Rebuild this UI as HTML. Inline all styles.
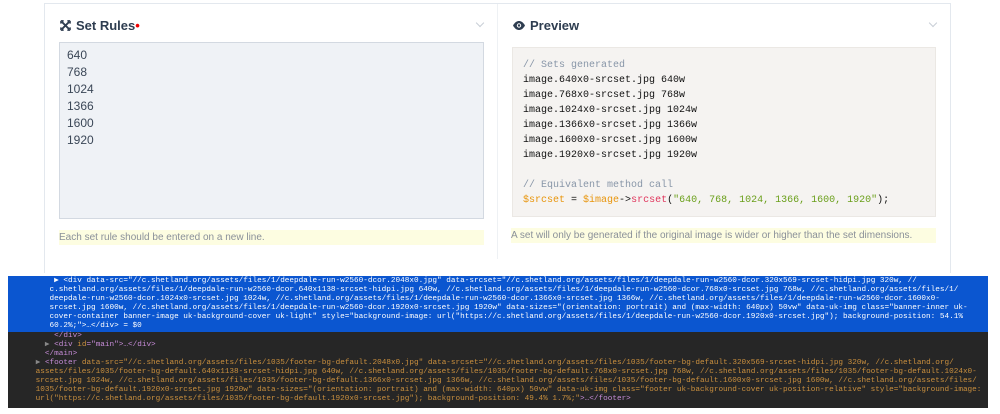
<!DOCTYPE html>
<html><head><meta charset="utf-8"><style>
*{margin:0;padding:0;box-sizing:border-box}
body{width:1000px;height:414px;background:#fff;font-family:"Liberation Sans",sans-serif;position:relative;overflow:hidden}
.card{position:absolute;left:44px;top:3px;width:907px;height:270px;border-left:1px solid #e3e8ee;border-right:1px solid #e3e8ee;border-top:1px solid #e3e8ee}
.div{position:absolute;left:497px;top:4px;width:1px;height:255px;background:#eef1f4}
.t{position:absolute;top:18px;font-size:13px;font-weight:bold;color:#2e3d50;display:flex;align-items:center;gap:5px}
.chev{position:absolute;top:20px;width:6px;height:6px;border-right:1px solid #c8ced6;border-bottom:1px solid #c8ced6;transform:rotate(45deg)}
.ta{position:absolute;left:59px;top:42px;width:425px;height:177px;background:#eff2f6;border:1px solid #d3d9e1;padding:4px 7px;font-size:12px;line-height:17px;color:#3b4757}
.help{position:absolute;background:#fdfde1;font-size:10px;color:#8a9099;line-height:15px;height:15px}
.code{position:absolute;left:512px;top:47px;width:424px;height:170px;background:#f5f3f1;border:1px solid #ebe8e4;padding:10px 10px;font-family:"Liberation Mono",monospace;font-size:10px;line-height:15px;color:#111;white-space:pre}
.c{color:#8896a8}.o{color:#e8950c}.p{color:#e0355c}.g{color:#6a9f1a}
.dev{position:absolute;left:8px;top:276px;width:980px;height:132px;background:#262626;font-family:"Liberation Mono",monospace;font-size:7.7px;line-height:9px;white-space:pre;overflow:hidden}
.blue{background:#0b56d0;color:#fff;height:56px;padding-top:1px}
.dk{color:#c98f3e}
.tag{color:#c58bd6}
</style></head><body>
<div class="card"></div>
<div class="div"></div>
<div class="t" style="left:60px"><svg width="11" height="11" viewBox="0 0 12 12" fill="none" stroke="#2e3d50" stroke-width="2"><path d="M2 2L10 10M10 2L2 10"/><path d="M1 1h3M1 1v3M11 1h-3M11 1v3M1 11h3M1 11v-3M11 11h-3M11 11v-3" stroke-width="1.6"/></svg><span>Set Rules<span style="color:#e00">•</span></span></div>
<div class="chev" style="left:477px"></div>
<div class="ta">640<br>768<br>1024<br>1366<br>1600<br>1920</div>
<div class="help" style="left:59px;top:230px;width:425px">Each set rule should be entered on a new line.</div>
<div class="t" style="left:513px"><svg width="12" height="9" viewBox="0 0 12 9"><path d="M0 4.5C2 1 4 0 6 0s4 1 6 4.5C10 8 8 9 6 9S2 8 0 4.5z" fill="#2e3d50"/><circle cx="6" cy="4.5" r="2.2" fill="#fff"/><circle cx="6" cy="4.5" r="1.2" fill="#2e3d50"/></svg><span>Preview</span></div>
<div class="chev" style="left:930px"></div>
<div class="code"><span class="c">// Sets generated</span>
image.640x0-srcset.jpg 640w
image.768x0-srcset.jpg 768w
image.1024x0-srcset.jpg 1024w
image.1366x0-srcset.jpg 1366w
image.1600x0-srcset.jpg 1600w
image.1920x0-srcset.jpg 1920w

<span class="c">// Equivalent method call</span>
<span class="o">$srcset</span> = <span class="o">$image</span>-&gt;<span class="p">srcset</span>(<span class="g">"640, 768, 1024, 1366, 1600, 1920"</span>);</div>
<div class="help" style="left:511px;top:228px;width:425px">A set will only be generated if the original image is wider or higher than the set dimensions.</div>
<div class="dev"><div class="blue">          ▶ &lt;div data-src="//c.shetland.org/assets/files/1/deepdale-run-w2560-dcor.2048x0.jpg" data-srcset="//c.shetland.org/assets/files/1/deepdale-run-w2560-dcor.320x569-srcset-hidpi.jpg 320w, //
         c.shetland.org/assets/files/1/deepdale-run-w2560-dcor.640x1138-srcset-hidpi.jpg 640w, //c.shetland.org/assets/files/1/deepdale-run-w2560-dcor.768x0-srcset.jpg 768w, //c.shetland.org/assets/files/1/
         deepdale-run-w2560-dcor.1024x0-srcset.jpg 1024w, //c.shetland.org/assets/files/1/deepdale-run-w2560-dcor.1366x0-srcset.jpg 1366w, //c.shetland.org/assets/files/1/deepdale-run-w2560-dcor.1600x0-
         srcset.jpg 1600w, //c.shetland.org/assets/files/1/deepdale-run-w2560-dcor.1920x0-srcset.jpg 1920w" data-sizes="(orientation: portrait) and (max-width: 640px) 50vw" data-uk-img class="banner-inner uk-
         cover-container banner-image uk-background-cover uk-light" style="background-image: url("https://c.shetland.org/assets/files/1/deepdale-run-w2560-dcor.1920x0-srcset.jpg"); background-position: 54.1%
         60.2%;"&gt;…&lt;/div&gt; = $0</div><div class="tag">          &lt;/div&gt;
        <span style="color:#888">▶</span> &lt;div <span class="dk">id</span>="main"&gt;…&lt;/div&gt;
        &lt;/main&gt;
      <span style="color:#888">▶</span> &lt;footer <span class="dk">data-src="//c.shetland.org/assets/files/1035/footer-bg-default.2048x0.jpg" data-srcset="//c.shetland.org/assets/files/1035/footer-bg-default.320x569-srcset-hidpi.jpg 320w, //c.shetland.org/</span>
<span class="dk">      assets/files/1035/footer-bg-default.640x1138-srcset-hidpi.jpg 640w, //c.shetland.org/assets/files/1035/footer-bg-default.768x0-srcset.jpg 768w, //c.shetland.org/assets/files/1035/footer-bg-default.1024x0-
      srcset.jpg 1024w, //c.shetland.org/assets/files/1035/footer-bg-default.1366x0-srcset.jpg 1366w, //c.shetland.org/assets/files/1035/footer-bg-default.1600x0-srcset.jpg 1600w, //c.shetland.org/assets/files/
      1035/footer-bg-default.1920x0-srcset.jpg 1920w" data-sizes="(orientation: portrait) and (max-width: 640px) 50vw" data-uk-img class="footer uk-background-cover uk-position-relative" style="background-image:
      url("https://c.shetland.org/assets/files/1035/footer-bg-default.1920x0-srcset.jpg"); background-position: 49.4% 1.7%;"</span>&gt;…&lt;/footer&gt;</div></div>
</body></html>
